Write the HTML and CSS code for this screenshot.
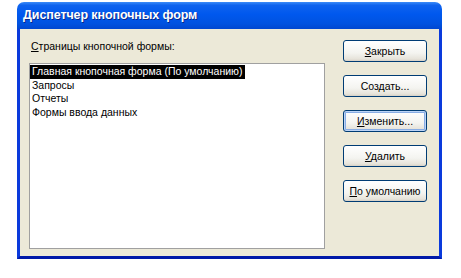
FILE: index.html
```html
<!DOCTYPE html>
<html lang="ru">
<head>
    <meta charset="UTF-8">
    <title>Диспетчер кнопочных форм</title>
    <link rel="stylesheet" href="styles.css">
</head>
<body>
    <div class="window">
        <div class="titlebar">Диспетчер кнопочных форм</div>
        <div class="client">
            <div class="left">
                <div class="caption"><u>С</u>траницы кнопочной формы:</div>
                <div class="listbox">
                    <div class="item selected">Главная кнопочная форма (По умолчанию)</div>
                    <div class="item">Запросы</div>
                    <div class="item">Отчеты</div>
                    <div class="item">Формы ввода данных</div>
                </div>
            </div>
            <div class="buttons">
                <button><u>З</u>акрыть</button>
                <button>Соз<u>д</u>ать...</button>
                <button class="focused"><u>И</u>зменить...</button>
                <button><u>У</u>далить</button>
                <button><u>П</u>о умолчанию</button>
            </div>
        </div>
    </div>
</body>
</html>
```

FILE: styles.css
```css
body {
    margin: 0;
    background: #FFFFFF;
    font-family: 'Liberation Sans', Arial, sans-serif;
    font-size: 10.5px;
}
.window {
    width: 425px;
    margin: 2px 0 0 17px;
}
.titlebar {
    height: 27px;
    box-sizing: border-box;
    padding: 6px 0 0 6px;
    border-radius: 7px 7px 0 0;
    background: linear-gradient(#3C8CF8 0%, #0F63EE 12%, #0058EE 45%, #0052E0 80%, #0047D0 100%);
    color: #FFFFFF;
    font-family: 'Liberation Sans', Arial, sans-serif;
    font-weight: 700;
    font-size: 12.5px;
    letter-spacing: -0.1px;
    text-shadow: 1px 1px 0 #0A2A8A;
}
.client {
    display: flex;
    height: 230px;
    box-sizing: border-box;
    padding: 11px 0 0 9px;
    background: #ECE9D8;
    border: 3px solid #0A3ADC;
    border-top: none;
    border-bottom-color: #0019A8;
}
.left {
    display: flex;
    flex-direction: column;
}
.caption {
    height: 12px;
    line-height: 12px;
    padding-left: 2px;
    margin-bottom: 11px;
    color: #000000;
}
.listbox {
    width: 296px;
    height: 186px;
    box-sizing: border-box;
    background: #FFFFFF;
    border: 1px solid #A0A0A0;
    padding-top: 1px;
}
.item {
    width: fit-content;
    padding: 0 3px 0 2px;
    line-height: 13.6px;
    color: #000000;
}
.item.selected {
    background: #000000;
    color: #FFFFFF;
}
.buttons {
    display: flex;
    flex-direction: column;
    gap: 13px;
    margin-left: 18px;
}
button {
    width: 84px;
    height: 22px;
    padding: 0;
    border: 1px solid #003C74;
    border-radius: 3px;
    background: linear-gradient(#FFFFFF 0%, #F4F4F0 60%, #E6E3DA 90%, #D6D0C5 100%);
    font-family: 'Liberation Sans', Arial, sans-serif;
    font-size: 10.5px;
    color: #000000;
}
button.focused {
    box-shadow: inset 0 0 0 1px #BCD4F6, inset 0 0 0 2px #89ADE4;
}
```
